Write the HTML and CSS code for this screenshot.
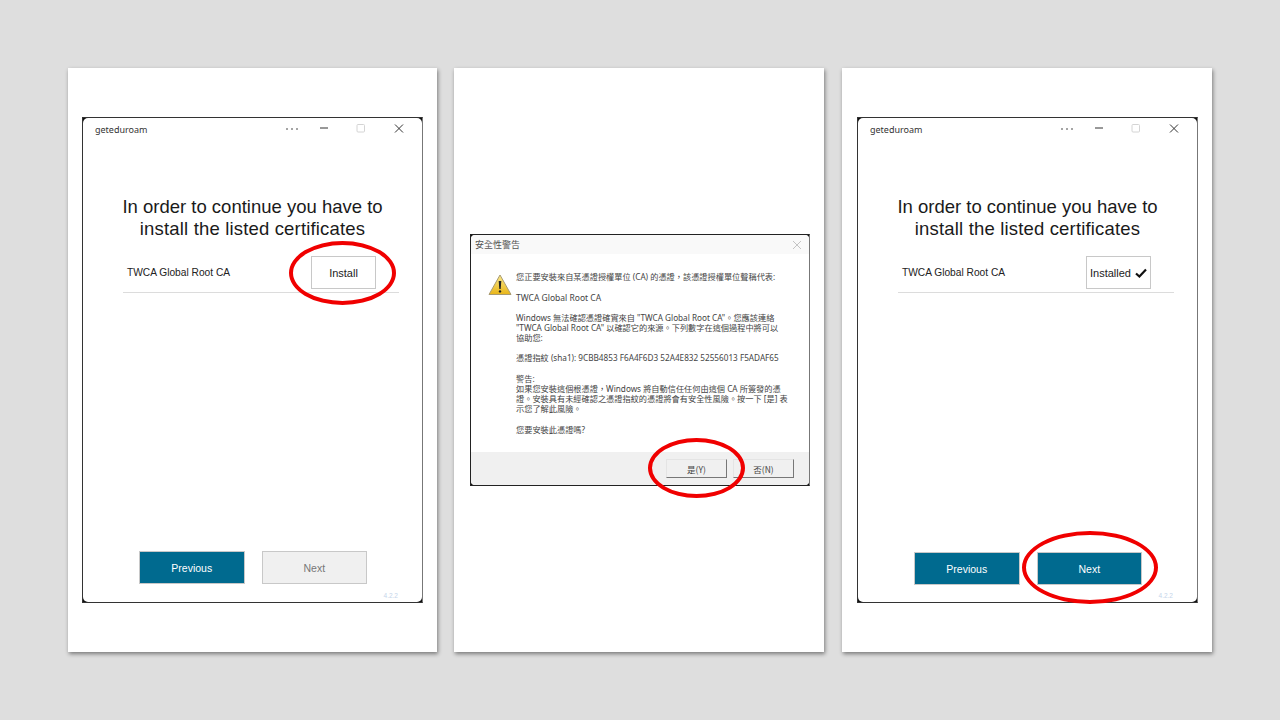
FILE: index.html

```html
<!DOCTYPE html>
<html>
<head>
<meta charset="UTF-8">
<title>geteduroam certificate steps</title>
<link rel="stylesheet" href="styles.css">
</head>
<body>
<div class="slides">

  <section class="slide slide-first">
    <div class="window">
      <div class="window-inner">
        <div class="titlebar">
          <span class="app-name">geteduroam</span>
          <div class="controls">
            <svg class="ctl ctl-more" width="14" height="12" viewBox="0 0 14 12"><circle cx="2" cy="6" r="0.8"/><circle cx="7" cy="6" r="0.8"/><circle cx="12" cy="6" r="0.8"/></svg>
            <svg class="ctl ctl-min" width="10" height="12" viewBox="0 0 10 12"><path d="M1 5h8" stroke="#333" stroke-width="1"/></svg>
            <svg class="ctl ctl-max" width="10" height="12" viewBox="0 0 10 12"><rect x="1" y="1.5" width="7.5" height="7.5" rx="1" fill="none" stroke="#d4d4d4"/></svg>
            <svg class="ctl ctl-close" width="10" height="12" viewBox="0 0 10 12"><path d="M1 1.5l8 8M9 1.5l-8 8" stroke="#333" stroke-width="1" fill="none"/></svg>
          </div>
        </div>
        <h1 class="heading">In order to continue you have to<br><span class="heading-low">install the listed certificates</span></h1>
        <div class="cert-row">
          <span class="cert-name">TWCA Global Root CA</span>
          <button class="cert-btn">Install</button>
        </div>
        <div class="nav">
          <button class="nav-btn nav-on">Previous</button>
          <button class="nav-btn nav-off">Next</button>
        </div>
        <div class="version">4.2.2</div>
      </div>
    </div>
    <div class="ring ring-install"></div>
  </section>

  <section class="slide slide-mid">
    <div class="dialog">
      <div class="dialog-inner">
        <div class="dialog-title">
          <span>安全性警告</span>
          <svg width="10" height="10" viewBox="0 0 10 10"><path d="M1 1l8 8M9 1l-8 8" stroke="#c4c4c4" stroke-width="1" fill="none"/></svg>
        </div>
        <div class="dialog-body">
          <svg class="warn" width="24" height="22" viewBox="0 0 24 22">
            <defs>
              <linearGradient id="warnFill" x1="0" y1="0" x2="0" y2="1">
                <stop offset="0" stop-color="#fbe98a"/>
                <stop offset="1" stop-color="#e8b518"/>
              </linearGradient>
            </defs>
            <path d="M12 1L23 20.5H1z" fill="url(#warnFill)" stroke="#a89a70" stroke-width="1" stroke-linejoin="round"/>
            <path d="M10.7 7h2.6l-.6 8h-1.4z" fill="#222"/>
            <circle cx="12" cy="17.4" r="1.2" fill="#222"/>
          </svg>
          <div class="dialog-text">
            <p>您正要安裝來自某憑證授權單位 (CA) 的憑證，該憑證授權單位聲稱代表:</p>
            <p class="cert-line">TWCA Global Root CA</p>
            <p>Windows 無法確認憑證確實來自 "TWCA Global Root CA"。您應該連絡<br>"TWCA Global Root CA" 以確認它的來源。下列數字在這個過程中將可以<br>協助您:</p>
            <p>憑證指紋 (sha1): 9CBB4853 F6A4F6D3 52A4E832 52556013 F5ADAF65</p>
            <p>警告:<br>如果您安裝這個根憑證，Windows 將自動信任任何由這個 CA 所簽發的憑<br>證。安裝具有未經確認之憑證指紋的憑證將會有安全性風險。按一下 [是] 表<br>示您了解此風險。</p>
            <p>您要安裝此憑證嗎?</p>
          </div>
        </div>
        <div class="dialog-foot">
          <button class="win-btn">是(Y)</button>
          <button class="win-btn">否(N)</button>
        </div>
      </div>
    </div>
    <div class="ring ring-yes"></div>
  </section>

  <section class="slide slide-last">
    <div class="window">
      <div class="window-inner">
        <div class="titlebar">
          <span class="app-name">geteduroam</span>
          <div class="controls">
            <svg class="ctl ctl-more" width="14" height="12" viewBox="0 0 14 12"><circle cx="2" cy="6" r="0.8"/><circle cx="7" cy="6" r="0.8"/><circle cx="12" cy="6" r="0.8"/></svg>
            <svg class="ctl ctl-min" width="10" height="12" viewBox="0 0 10 12"><path d="M1 5h8" stroke="#333" stroke-width="1"/></svg>
            <svg class="ctl ctl-max" width="10" height="12" viewBox="0 0 10 12"><rect x="1" y="1.5" width="7.5" height="7.5" rx="1" fill="none" stroke="#d4d4d4"/></svg>
            <svg class="ctl ctl-close" width="10" height="12" viewBox="0 0 10 12"><path d="M1 1.5l8 8M9 1.5l-8 8" stroke="#333" stroke-width="1" fill="none"/></svg>
          </div>
        </div>
        <h1 class="heading">In order to continue you have to<br><span class="heading-low">install the listed certificates</span></h1>
        <div class="cert-row">
          <span class="cert-name">TWCA Global Root CA</span>
          <button class="cert-btn">Installed
            <svg width="12" height="10" viewBox="0 0 12 10"><path d="M1 5.5l3.4 3L11 1.5" fill="none" stroke="#111" stroke-width="2.2"/></svg>
          </button>
        </div>
        <div class="nav">
          <button class="nav-btn nav-on">Previous</button>
          <button class="nav-btn nav-on">Next</button>
        </div>
        <div class="version">4.2.2</div>
      </div>
    </div>
    <div class="ring ring-next"></div>
  </section>

</div>
</body>
</html>
```

FILE: styles.css

```css
body {
  margin: 0;
  height: 720px;
  overflow: hidden;
  background-color: #dedede;
  font-family: "Liberation Sans", Arial, sans-serif;
}
.slides {
  display: flex;
  padding: 68px 68px 0;
}
.slide {
  position: relative;
  width: 370px;
  height: 584px;
  box-sizing: border-box;
  background: white;
  box-shadow: 1px 2px 4px rgba(0, 0, 0, 0.45);
}
.slide-first {
  width: 369px;
  padding: 49px 0 0 14px;
  margin-right: 17px;
}
.slide-mid {
  padding: 166px 0 0 16px;
  margin-right: 18px;
}
.slide-last {
  padding: 49px 0 0 15px;
}

/* geteduroam window, square black backing shows at the rounded corners */
.window {
  width: 341px;
  height: 486px;
  box-sizing: border-box;
  background: #111;
  border: 1px solid #333;
  border-right-color: #777;
}
.window-inner {
  display: flex;
  flex-direction: column;
  height: 100%;
  background: white;
  border-radius: 5px;
}
.titlebar {
  display: flex;
  justify-content: space-between;
  align-items: center;
  height: 22px;
  padding: 0 18px 0 12px;
}
.app-name {
  font-family: "Noto Sans", sans-serif;
  font-size: 9px;
  color: #333;
}
.controls {
  display: flex;
  align-items: center;
}
.ctl {
  fill: #333;
  display: block;
}
.ctl-min {
  margin-left: 20px;
}
.ctl-max {
  margin-left: 27px;
}
.ctl-close {
  margin-left: 28px;
}
.heading {
  margin: 56px 0 0;
  font-size: 18.5px;
  font-weight: normal;
  line-height: 22px;
  text-align: center;
  color: #1a1a1a;
}
.heading-low {
  letter-spacing: 0.17px;
}
.cert-row {
  display: flex;
  justify-content: space-between;
  align-items: center;
  margin: 16px 23px 0 40px;
  padding: 0 23px 3px 4px;
  border-bottom: 1px solid #dcdcdc;
}
.cert-name {
  font-size: 10.2px;
  color: #222;
}
.cert-btn {
  display: flex;
  align-items: center;
  justify-content: center;
  gap: 4px;
  width: 65px;
  height: 33px;
  padding: 0;
  background: white;
  border: 1px solid #c8c8c8;
  font-family: inherit;
  font-size: 11px;
  color: #222;
}
.nav {
  display: flex;
  gap: 17px;
  margin: auto 0 0 56px;
}
.slide-last .nav {
  margin-bottom: -1px;
}
.nav-btn {
  width: 105.5px;
  height: 33px;
  padding: 0;
  border: 1px solid #c8c8c8;
  font-family: inherit;
  font-size: 10.5px;
}
.nav-on {
  background-color: #006a8f;
  color: white;
}
.nav-off {
  background-color: #f0f0f0;
  color: #777;
}
.version {
  height: 18px;
  padding: 8px 24px 0 0;
  box-sizing: border-box;
  text-align: right;
  font-size: 6.5px;
  color: #c5d5ea;
}

/* windows security dialog */
.dialog {
  width: 340px;
  height: 252px;
  box-sizing: border-box;
  background: #111;
  border: 1px solid #222;
  border-right-color: #777;
}
.dialog-inner {
  display: flex;
  flex-direction: column;
  height: 100%;
  background: white;
  border-radius: 4px;
  overflow: hidden;
}
.dialog-title {
  display: flex;
  justify-content: space-between;
  align-items: center;
  height: 19px;
  padding: 0 7px 0 4px;
  background: #f9f9f9;
  font-family: "Noto Sans CJK TC", sans-serif;
  font-size: 9px;
  color: #555;
}
.dialog-body {
  display: flex;
  flex: 1;
  padding: 18px 0 0 17px;
}
.warn {
  flex-shrink: 0;
  margin-top: 2px;
}
.dialog-text {
  margin-left: 4px;
  font-family: "Noto Sans", "Noto Sans CJK TC", sans-serif;
  font-size: 8.2px;
  line-height: 10.2px;
  color: #444;
  white-space: nowrap;
}
.dialog-text p {
  margin: 0 0 10.2px;
}
.dialog-text .cert-line {
  margin: 11.2px 0 9px;
  font-size: 8.5px;
}
.dialog-foot {
  display: flex;
  justify-content: flex-end;
  gap: 6px;
  height: 33px;
  padding: 7px 15px 0 0;
  box-sizing: border-box;
  background: #f0f0f0;
}
.win-btn {
  width: 61px;
  height: 19px;
  padding: 0;
  background: #f0f0f0;
  border: 1px solid;
  border-color: #e4e4e4 #777 #777 #e4e4e4;
  font-family: "Noto Sans CJK TC", sans-serif;
  font-size: 8.5px;
  color: #444;
}

/* red marker rings drawn over the screenshots */
.ring {
  position: absolute;
  box-sizing: border-box;
  border: 4px solid #f00000;
  border-radius: 50%;
}
.ring-install {
  left: 221px;
  top: 173px;
  width: 107px;
  height: 64px;
}
.ring-yes {
  left: 194px;
  top: 370px;
  width: 97px;
  height: 60px;
}
.ring-next {
  left: 180px;
  top: 463px;
  width: 136px;
  height: 73px;
}
```
